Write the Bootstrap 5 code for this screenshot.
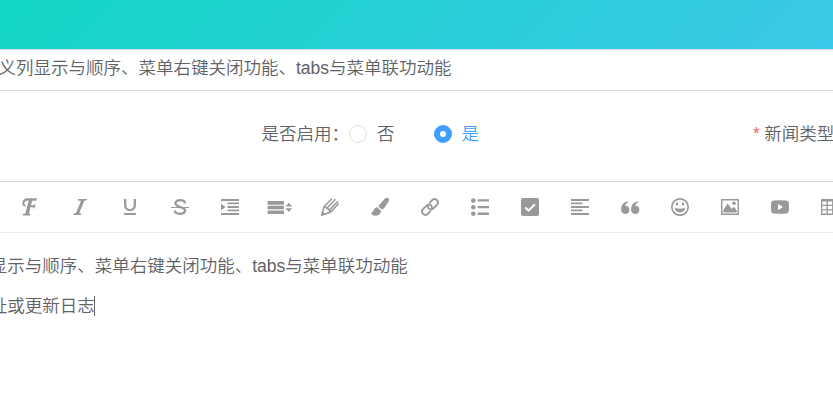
<!DOCTYPE html>
<html lang="zh-CN">
<head>
<meta charset="utf-8">
<meta name="viewport" content="width=device-width, initial-scale=1">
<title>新闻编辑</title>
<link href="https://cdn.jsdelivr.net/npm/bootstrap@5.3.0/dist/css/bootstrap.min.css" rel="stylesheet">
<style>
body{font:350 17.5px/26px "Liberation Sans","Noto Sans CJK SC",sans-serif;color:#606266;background:#fff;height:410px}
.topbar{height:49px;background:linear-gradient(135deg,#12d6c4 0%,#3cc8e8 100%)}
.title-field{height:42px;border-top:1px solid #dcdfe6;border-bottom:1px solid #dcdfe6;padding-top:5px}
.title-field span{margin-left:-1.5px}
.form-line{height:90px;padding:30px 0 0 261.5px}
.dot{width:18px;height:18px;border:1px solid #dcdfe6;border-radius:50%;margin-right:10px}
.dot.on{border:6px solid #409eff}
.choice{margin-right:39px}
.choice.on{color:#409eff}
.kind{margin-left:235px}
.kind i{color:#f56c6c;font-style:normal;margin-right:4.5px}
.tools{height:52px;border-top:1px solid #ccd5d3;border-bottom:1px solid #ebebeb;padding-left:5px}
.tool{width:50px;height:50px;border:0;background:none;padding:0;color:#999}
.tool svg{width:26px;height:20px;display:block;margin:0 auto;overflow:visible;fill:currentColor}
.tool .ln{fill:none;stroke:currentColor;stroke-width:2}
.editor{padding:20px 0 0}
.editor p{margin:0 0 14px -10.3px}
.caret{width:1px;height:20px;margin-left:-.7px;background:#606266}
</style>
<script src="https://cdn.jsdelivr.net/npm/bootstrap@5.3.0/dist/js/bootstrap.bundle.min.js"></script>
</head>
<body class="overflow-hidden text-nowrap">
<header class="topbar"></header>
<div class="title-field"><span>义列显示与顺序、菜单右键关闭功能、tabs与菜单联功动能</span></div>
<div class="form-line d-flex align-items-start">
  <span>是否启用：</span>
  <span class="choice d-flex align-items-center"><span class="dot"></span>否</span>
  <span class="choice on d-flex align-items-center"><span class="dot on"></span>是</span>
  <span class="kind"><i>*</i>新闻类型</span>
</div>
<div class="tools d-flex align-items-center">
  <button class="tool flex-shrink-0" aria-label="字体"><svg viewBox="-3 0 26 20"><path d="M6.600 1.200H17L16.200 3.800H12.200L11 8.200h3l.7-1h.8l-.9 4.400h-.8l-.3-1.300h-3L9.300 15.500q-.4 1.600 1 2.100l-.2.800H3.200q-.8-.6-.3-1.600 1.600.6 2.500-.8L8.700 3.500Q5 3 4.300 6q-.2 1.700 1.500 2.600l-.4 1Q2 9 2.300 5.700 2.900 1.700 6.600 1.200"/></svg></button>
  <button class="tool flex-shrink-0" aria-label="斜体"><svg viewBox="-3 0 26 20"><path d="M8 2h9l-.4 1.300-2.300.5-5 12.200 2 .7-.4 1.300H3.300l.5-1.300 2.200-.6 5-12.200L7.500 3.300z"/></svg></button>
  <button class="tool flex-shrink-0" aria-label="下划线"><svg viewBox="-3 0 26 20"><path class="ln" style="stroke-width:2.300" d="M5.200 2v6.300a4.800 4.800 0 0 0 9.600 0V2"/><path d="M4 16h12v2H4z"/></svg></button>
  <button class="tool flex-shrink-0" aria-label="删除线"><svg viewBox="-3 0 26 20"><path class="ln" style="stroke-width:2.300" d="M15 6.300C14.600 2.200 5.400 1.900 5.400 6.300c0 4.300 9.700 3.200 9.700 7.200 0 4.500-10 4.400-10.300 0"/><path d="M1 10h18v1H1z"/></svg></button>
  <button class="tool flex-shrink-0" aria-label="缩进"><svg viewBox="-3 0 26 20"><path d="M1 2h18v2H1zM7.500 5.400H19v1.800H7.500zM7.500 9H19v2H7.500zM7.500 12.500H19v1.800H7.500zM1 16h18v2H1zM1 6.800l4.500 3.300L1 13.400z"/></svg></button>
  <button class="tool flex-shrink-0" aria-label="行高"><svg viewBox="-3 0 26 20"><path d="M-2.400 4h16.300v3.700H-2.400zM-2.400 8.700h16.300v3.600H-2.400zM-2.400 13.400h16.300V17H-2.400zM15.600 9.500l3.300-3.700 3.300 3.700zM15.600 11.300h6.600l-3.300 3.700z"/></svg></button>
  <button class="tool flex-shrink-0" aria-label="文字颜色"><svg viewBox="-3 0 26 20"><path class="ln" style="stroke-width:1.500" d="M12 1.500L4 9.800 1.800 18l8.600-2.700 8.300-8.700M15.300 2.300L7.300 10.800M18 4.300L9.300 13.300M4 9.800q2.200-.2 2.800 1.600 2.300 0 2.300 2 1.400.3 1.300 1.900"/><path d="M2.400 14L1 19l5-1.500z"/></svg></button>
  <button class="tool flex-shrink-0" aria-label="背景颜色"><svg viewBox="-3 0 26 20"><path d="M14.800 1.800q2-1.700 3.600-.7 1.400 1.300.1 3.600L14 11.300q-1.200 1.400-2.700.7-2.900-1.300-2.500-3.400zM7.500 10.300q1.200 2.500 3.500 3.200-.2 5-5.200 5.200-4.200 0-4.800-3.200 1.800.5 2.200-1.400 1-3.600 4.300-3.800"/></svg></button>
  <button class="tool flex-shrink-0" aria-label="链接"><svg viewBox="-3 0 26 20"><g class="ln" style="stroke-width:1.800"><path d="M9 6.300l3.300-3.300q2.300-2 4.700.1 2.200 2.400 0 4.800l-3.700 3.600q-2.600 1.900-4.700-.2-1.300-1.700-.3-3.400"/><path d="M11 13.700l-3.300 3.300q-2.300 2-4.700-.1-2.200-2.400 0-4.800l3.700-3.600q2.600-1.900 4.700.2 1.300 1.700.3 3.400"/></g></svg></button>
  <button class="tool flex-shrink-0" aria-label="列表"><svg viewBox="-3 0 26 20"><circle cx="3.300" cy="3.600" r="2.300"/><circle cx="3.300" cy="10.200" r="2.300"/><circle cx="3.300" cy="16.800" r="2.300"/><path d="M7.700 2.300H19v2.300H7.700zM7.700 9H19v2.300H7.700zM7.700 15.600H19v2.300H7.700z"/></svg></button>
  <button class="tool flex-shrink-0" aria-label="待办"><svg viewBox="-3 0 26 20"><rect x="1" y="1" width="18" height="18" rx="2"/><path d="M5.300 10.500l3.300 3.100 6.200-6.400" fill="none" stroke="#fff" stroke-width="2"/></svg></button>
  <button class="tool flex-shrink-0" aria-label="对齐"><svg viewBox="-3 0 26 20"><path d="M1 2h18v2H1zM1 5.500h11.500v1.800H1zM1 9h18v2H1zM1 12.500h11.500v1.800H1zM1 16h18v2H1z"/></svg></button>
  <button class="tool flex-shrink-0" aria-label="引用"><svg viewBox="-3 0 26 20"><path d="M8.200 4.300v1Q5.500 6.300 5.200 9q4-.4 4.200 3.700Q9.200 17 5.200 17 1 16.700 1 12 1.300 5.500 8.200 4.300"/><path d="M18.200 4.300v1q-2.700 1-3 3.700 4-.4 4.200 3.700-.2 4.300-4.200 4.300-4.200-.3-4.200-5 .3-6.500 7.200-7.700"/></svg></button>
  <button class="tool flex-shrink-0" aria-label="表情"><svg viewBox="-3 0 26 20"><circle class="ln" style="stroke-width:1.700" cx="10" cy="10" r="8.200"/><ellipse cx="7" cy="7" rx="1.200" ry="1.700"/><ellipse cx="13" cy="7" rx="1.200" ry="1.700"/><path d="M4.700 10.500q5.300 2.400 10.600 0-.8 4.900-5.300 4.900t-5.300-4.900"/></svg></button>
  <button class="tool flex-shrink-0" aria-label="图片"><svg viewBox="-3 0 26 20"><path fill-rule="evenodd" d="M1 2h18v16H1zM2.400 3.400v13.200h15.200V3.400z"/><path d="M3.300 15.600v-2.400l4.300-6.600 4 5.200 2.400-2 2.800 3.600v2.200z"/><circle cx="14" cy="6.300" r="1.800"/></svg></button>
  <button class="tool flex-shrink-0" aria-label="视频"><svg viewBox="-3 0 26 20"><path fill-rule="evenodd" d="M3.500 3.500q6.500-.7 13 0 2.200.3 2.300 2.500.4 4 0 8-.2 2.300-2.300 2.500-6.500.7-13 0-2.200-.3-2.300-2.500-.4-4 0-8 .2-2.300 2.300-2.500M8 6.800v6.500l5-3.200z"/></svg></button>
  <button class="tool flex-shrink-0" aria-label="表格"><svg viewBox="-3 0 26 20"><path fill-rule="evenodd" d="M1 2h18v16H1zM2.300 4.600v3.200h4.200V4.600zM7.900 4.600v3.200h4.200V4.600zM13.500 4.600v3.200h4.200V4.600zM2.300 9v3.200h4.200V9zM7.900 9v3.200h4.200V9zM13.500 9v3.200h4.200V9zM2.300 13.400v3.200h4.200v-3.200zM7.900 13.400v3.200h4.200v-3.200zM13.500 13.400v3.200h4.200v-3.200z"/></svg></button>
</div>
<main class="editor">
  <p>显示与顺序、菜单右键关闭功能、tabs与菜单联功动能</p>
  <p class="d-flex align-items-center">址或更新日志<span class="caret"></span></p>
</main>
</body>
</html>
